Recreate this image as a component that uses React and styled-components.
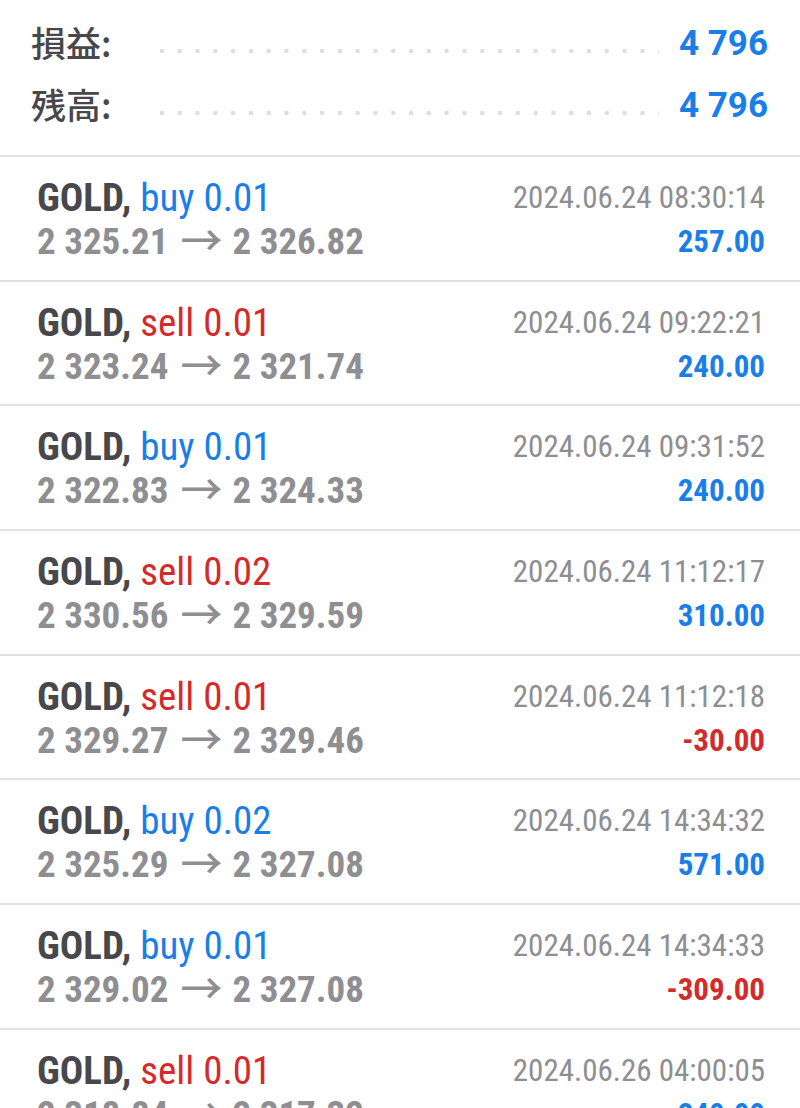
import React from "react";
import styled, { createGlobalStyle } from "styled-components";

const BLUE = "#1a7ee8";
const RED = "#d42a2a";
const DARK = "#47474c";
const GRAY = "#8e8e93";

const trades = [
  { side: "buy", lot: "0.01", open: "2 325.21", close: "2 326.82", time: "2024.06.24 08:30:14", profit: "257.00" },
  { side: "sell", lot: "0.01", open: "2 323.24", close: "2 321.74", time: "2024.06.24 09:22:21", profit: "240.00" },
  { side: "buy", lot: "0.01", open: "2 322.83", close: "2 324.33", time: "2024.06.24 09:31:52", profit: "240.00" },
  { side: "sell", lot: "0.02", open: "2 330.56", close: "2 329.59", time: "2024.06.24 11:12:17", profit: "310.00" },
  { side: "sell", lot: "0.01", open: "2 329.27", close: "2 329.46", time: "2024.06.24 11:12:18", profit: "-30.00" },
  { side: "buy", lot: "0.02", open: "2 325.29", close: "2 327.08", time: "2024.06.24 14:34:32", profit: "571.00" },
  { side: "buy", lot: "0.01", open: "2 329.02", close: "2 327.08", time: "2024.06.24 14:34:33", profit: "-309.00" },
  { side: "sell", lot: "0.01", open: "2 318.84", close: "2 317.32", time: "2024.06.26 04:00:05", profit: "240.00" },
];

const GlobalStyle = createGlobalStyle`
  html, body {
    margin: 0;
    padding: 0;
    background: #fff;
    overflow: hidden;
  }
  body {
    font-family: Roboto, "Noto Sans CJK JP", sans-serif;
  }
`;

const Page = styled.div`
  width: 800px;
  height: 1108px;
  overflow: hidden;
  background: #fff;
`;

const Summary = styled.div`
  display: flex;
  flex-direction: column;
  gap: 20px;
  padding: 22px 32px 0 31px;
  height: 157px;
  box-sizing: border-box;
  border-bottom: 2px solid #e2e2e2;
`;

const SummaryRow = styled.div`
  display: flex;
  align-items: center;
  height: 42px;
`;

const SummaryLabel = styled.span`
  font-family: "Noto Sans CJK JP", sans-serif;
  font-size: 35px;
  font-weight: 500;
  color: ${DARK};
  width: 122px;
  line-height: 1;
  margin-top: -3px;
`;

const Dots = styled.span`
  flex: 1;
  height: 8px;
  margin: 16px 20px 0 0;
  background-image: radial-gradient(circle, #dedede 2px, transparent 2.6px);
  background-size: 17.8px 8px;
  background-repeat: repeat-x;
`;

const SummaryValue = styled.span`
  font-family: Roboto, sans-serif;
  font-size: 35px;
  font-weight: 700;
  color: ${BLUE};
  line-height: 1;
`;

const Row = styled.div`
  display: grid;
  grid-template-columns: 1fr auto;
  grid-template-rows: 44px 44px;
  align-content: start;
  padding: 19px 35px 0 37px;
  box-sizing: border-box;
  height: 124.7px;
  border-bottom: 2px solid #e2e2e2;
  font-family: "Roboto Condensed", Roboto, sans-serif;
  font-stretch: condensed;
  line-height: 44px;
`;

const Title = styled.div`
  font-size: 39px;
  color: ${DARK};
  font-weight: 700;
  white-space: nowrap;
`;

const Deal = styled.span`
  font-weight: 400;
  color: ${(p) => (p.$side === "buy" ? BLUE : RED)};
`;

const Prices = styled.div`
  font-size: 37px;
  font-weight: 700;
  color: ${GRAY};
  white-space: nowrap;
`;

const Arrow = styled.span`
  font-family: "Noto Sans CJK JP", sans-serif;
  font-size: 42px;
  font-weight: 500;
  line-height: 0;
  margin: 0 10px 0 12px;
  position: relative;
  top: 2px;
`;

const Time = styled.div`
  font-size: 31px;
  color: ${GRAY};
  text-align: right;
`;

const Profit = styled.div`
  font-size: 31px;
  font-weight: 700;
  text-align: right;
  color: ${(p) => (p.$negative ? RED : BLUE)};
`;

function TradeRow({ trade }) {
  return (
    <Row>
      <Title>
        GOLD, <Deal $side={trade.side}>{trade.side} {trade.lot}</Deal>
      </Title>
      <Time>{trade.time}</Time>
      <Prices>
        {trade.open}
        <Arrow>→</Arrow>
        {trade.close}
      </Prices>
      <Profit $negative={trade.profit.startsWith("-")}>{trade.profit}</Profit>
    </Row>
  );
}

export default function App() {
  return (
    <Page>
      <GlobalStyle />
      <Summary>
        <SummaryRow>
          <SummaryLabel>損益:</SummaryLabel>
          <Dots />
          <SummaryValue>4 796</SummaryValue>
        </SummaryRow>
        <SummaryRow>
          <SummaryLabel>残高:</SummaryLabel>
          <Dots />
          <SummaryValue>4 796</SummaryValue>
        </SummaryRow>
      </Summary>
      {trades.map((t, i) => (
        <TradeRow key={i} trade={t} />
      ))}
    </Page>
  );
}
